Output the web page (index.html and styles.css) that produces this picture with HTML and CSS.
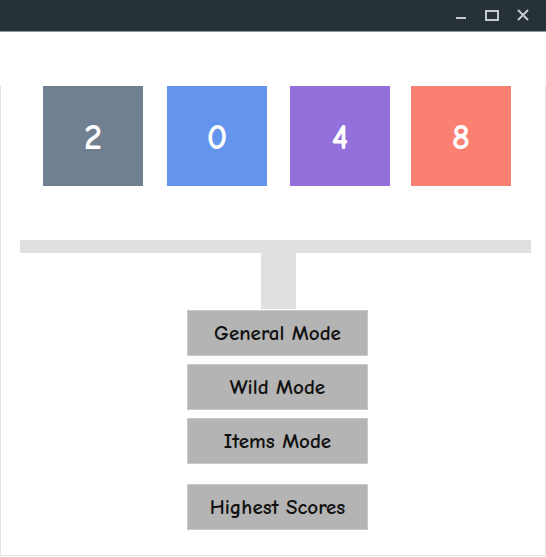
FILE: index.html
```html
<!DOCTYPE html>
<html>
<head>
<meta charset="utf-8">
<link rel="stylesheet" href="styles.css">
</head>
<body>
<div class="titlebar">
  <svg class="controls" width="546" height="31" viewBox="0 0 546 31">
    <rect x="456" y="17" width="10" height="2" fill="#c3cbcf"/>
    <rect x="486" y="11" width="12" height="9" fill="none" stroke="#c3cbcf" stroke-width="2"/>
    <path d="M518 10 L528 20 M528 10 L518 20" stroke="#c3cbcf" stroke-width="2"/>
  </svg>
</div>
<main class="board">
  <div class="tiles">
    <div class="tile t2">2</div>
    <div class="tile t0">0</div>
    <div class="tile t4">4</div>
    <div class="tile t8">8</div>
  </div>
  <div class="bar"></div>
  <div class="stem"></div>
  <div class="menu">
    <button class="btn">General Mode</button>
    <button class="btn">Wild Mode</button>
    <button class="btn">Items Mode</button>
    <button class="btn btn-last">Highest Scores</button>
  </div>
</main>
</body>
</html>
```
FILE: styles.css
```css
html, body {
  margin: 0;
  padding: 0;
  background: #ffffff;
}
body {
  width: 546px;
  height: 557px;
  overflow: hidden;
  font-family: "Comic Sans MS", "Comic Neue", "DejaVu Sans", sans-serif;
}
.titlebar {
  height: 31px;
  background: #263238;
  border-bottom: 1px solid #8f9aa0;
}
.controls {
  display: block;
}
.board {
  margin-top: 54px;
  height: 469px;
  border-left: 1px solid #e3e3e3;
  border-right: 1px solid #e3e3e3;
  border-bottom: 1px solid #e3e3e3;
  box-sizing: content-box;
  width: 544px;
}
.tiles {
  display: flex;
  padding-left: 42px;
}
.tile {
  width: 100px;
  height: 100px;
  margin-right: 24px;
  padding-top: 3px;
  box-sizing: border-box;
  color: #ffffff;
  font-size: 36px;
  font-weight: bold;
  display: flex;
  align-items: center;
  justify-content: center;
}
.t2 { background: #708090; }
.t0 { background: #6495ed; margin-right: 23px; }
.t4 { background: #9370db; margin-right: 21px; }
.t8 { background: #fa8072; }
.bar {
  margin-top: 54px;
  margin-left: 19px;
  width: 511px;
  height: 13px;
  background: #e0e0e0;
}
.stem {
  margin-left: 260px;
  width: 35px;
  height: 56px;
  background: #e0e0e0;
}
.menu {
  margin-top: 1px;
  margin-left: 186px;
  display: flex;
  flex-direction: column;
  gap: 8px;
  width: 181px;
}
.btn {
  width: 181px;
  height: 46px;
  margin: 0;
  padding: 0;
  border: 1px solid #c9c9c9;
  background: #b4b4b4;
  color: #111111;
  font-family: inherit;
  font-size: 21px;
  font-weight: bold;
}
.btn-last {
  margin-top: 12px;
}
```
